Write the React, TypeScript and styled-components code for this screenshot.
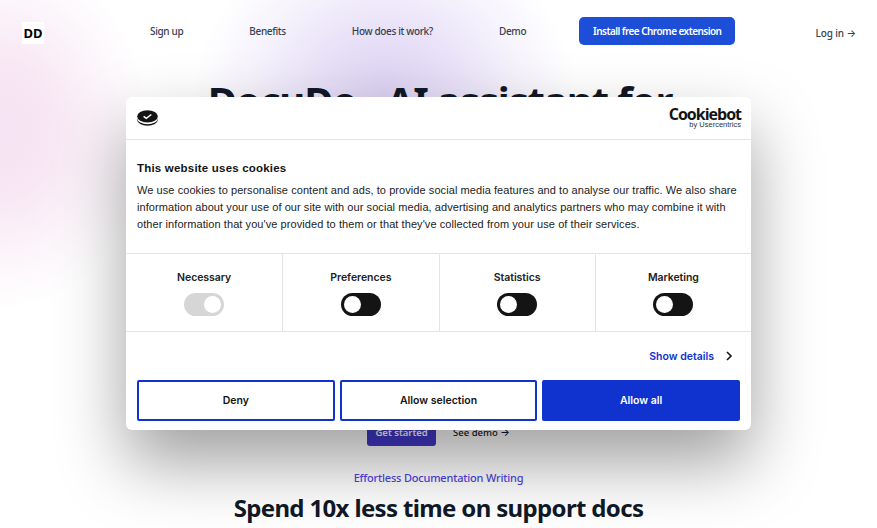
import React from 'react'
import styled, { createGlobalStyle } from 'styled-components'

const GlobalStyle = createGlobalStyle`
  html, body {
    margin: 0;
    padding: 0;
    height: 528px;
    overflow: hidden;
    background: #fff;
    font-family: 'Noto Sans', 'Liberation Sans', sans-serif;
  }
  * {
    box-sizing: border-box;
  }
`

const Page = styled.div`
  position: relative;
  width: 877px;
  height: 528px;
  overflow: hidden;
  background:
    radial-gradient(ellipse 150px 180px at 0px 130px, #f6e2f2 0%, rgba(246, 226, 242, 0.85) 35%, rgba(246, 226, 242, 0.35) 70%, rgba(246, 226, 242, 0) 100%),
    radial-gradient(ellipse 190px 160px at 385px 90px, #ddd3f3 0%, rgba(224, 214, 245, 0.75) 35%, rgba(224, 214, 245, 0.3) 70%, rgba(224, 214, 245, 0) 100%),
    #fff;
`

const Header = styled.header`
  display: flex;
  align-items: center;
  height: 66px;
  padding: 0 21px 0 22px;
`

const Logo = styled.div`
  display: flex;
  align-items: center;
  justify-content: center;
  width: 22px;
  height: 22px;
  background: #fff;
  color: #000;
  font-size: 13px;
  font-weight: 700;
`

const Nav = styled.nav`
  display: flex;
  align-items: center;
  gap: 66px;
  margin-left: 106px;
  margin-top: -5px;
`

const NavLink = styled.a`
  color: #374151;
  font-size: 10px;
  font-weight: 500;
  letter-spacing: -0.35px;
`

const InstallButton = styled.a`
  display: flex;
  align-items: center;
  justify-content: center;
  width: 156px;
  height: 28px;
  margin-left: -13px;
  border-radius: 5px;
  background: #1d4ed8;
  color: #fff;
  font-size: 10px;
  font-weight: 600;
  letter-spacing: -0.55px;
`

const LogIn = styled.a`
  margin-left: auto;
  color: #374151;
  font-size: 10px;
  font-weight: 500;
  letter-spacing: -0.1px;
`

const Arrow = styled.span`
  font-family: Inter, sans-serif;
  font-size: 10px;
`

const Hero = styled.section`
  display: flex;
  flex-direction: column;
  align-items: center;
`

const HeroTitle = styled.h1`
  margin: 11px 0 0 3px;
  color: #111827;
  font-size: 40px;
  line-height: 48px;
  font-weight: 700;
  letter-spacing: -1.1px;
  white-space: nowrap;
`

const Actions = styled.div`
  display: flex;
  align-items: center;
  gap: 17px;
  margin-top: 293px;
`

const StartButton = styled.a`
  display: flex;
  align-items: center;
  justify-content: center;
  width: 69px;
  height: 28px;
  border-radius: 3px;
  background: #4338ca;
  color: #fff;
  font-size: 9.5px;
  font-weight: 600;
`

const DemoLink = styled.a`
  color: #111827;
  font-size: 9.5px;
  font-weight: 500;
`

const Kicker = styled.p`
  margin: 23px 0 0;
  color: #4f46e5;
  font-size: 11px;
  line-height: 18px;
  font-weight: 500;
  letter-spacing: -0.2px;
`

const SectionTitle = styled.h2`
  margin: 5px 0 0;
  color: #111827;
  font-size: 24px;
  line-height: 32px;
  font-weight: 700;
  letter-spacing: -0.65px;
  white-space: nowrap;
`

const Dialog = styled.div`
  position: absolute;
  left: 126px;
  top: 97px;
  width: 625px;
  height: 333px;
  display: flex;
  flex-direction: column;
  background: #fff;
  border-radius: 6px;
  color: #141414;
  font-family: 'Liberation Sans', Arial, sans-serif;
  box-shadow: 0 32px 68px rgba(0, 0, 0, 0.38);
`

const DialogTop = styled.div`
  display: flex;
  align-items: center;
  justify-content: space-between;
  height: 42.5px;
  padding: 0 10px 0 11px;
  border-bottom: 1px solid #e4e4e4;
`

const Brand = styled.div`
  display: flex;
  flex-direction: column;
  align-items: flex-end;
`

const BrandName = styled.span`
  color: #141414;
  font-family: 'Open Sans', 'Liberation Sans', sans-serif;
  font-size: 16px;
  line-height: 14px;
  font-weight: 700;
  letter-spacing: -1px;
`

const BrandBy = styled.span`
  color: #333;
  font-size: 7.5px;
  line-height: 8px;
  font-weight: 400;
`

const Body = styled.div`
  height: 113px;
  padding: 21.5px 11px 0;
`

const BodyTitle = styled.h3`
  margin: 0 0 7px;
  font-size: 11.5px;
  line-height: 14px;
  font-weight: 700;
  letter-spacing: 0.2px;
`

const BodyText = styled.p`
  margin: 0;
  font-size: 11px;
  line-height: 17px;
  letter-spacing: 0.07px;
  color: #222;
`

const Consent = styled.div`
  display: grid;
  grid-template-columns: repeat(4, 1fr);
  height: 79.5px;
  border-top: 1px solid #e4e4e4;
  border-bottom: 1px solid #e4e4e4;
`

const ConsentItem = styled.div`
  display: flex;
  flex-direction: column;
  align-items: center;
  padding-top: 17.5px;
  gap: 8px;
  border-left: 1px solid #e4e4e4;
  &:first-child {
    border-left: 0;
  }
`

const ConsentLabel = styled.span`
  font-family: Inter, 'Liberation Sans', sans-serif;
  font-size: 10.5px;
  line-height: 14px;
  font-weight: 600;
  letter-spacing: -0.05px;
  color: #222;
`

const Toggle = styled.span<{ $locked?: boolean }>`
  display: flex;
  justify-content: ${(p) => (p.$locked ? 'flex-end' : 'flex-start')};
  align-items: center;
  width: 40px;
  height: 23px;
  padding: 0 3px;
  border-radius: 12px;
  background: ${(p) => (p.$locked ? '#d6d6d6' : '#141414')};
  &::after {
    content: '';
    width: 17px;
    height: 17px;
    border-radius: 50%;
    background: #fff;
  }
`

const DetailsRow = styled.div`
  display: flex;
  align-items: center;
  justify-content: flex-end;
  height: 48px;
  padding: 0 18px 0 0;
  gap: 11px;
`

const DetailsLink = styled.a`
  color: #1032cf;
  font-family: Inter, 'Liberation Sans', sans-serif;
  font-size: 10.5px;
  font-weight: 600;
`

const Buttons = styled.div`
  display: grid;
  grid-template-columns: repeat(3, 1fr);
  gap: 5px;
  padding: 0 11px;
`

const ActionButton = styled.button<{ $primary?: boolean }>`
  height: 41px;
  border: 2px solid #1032cf;
  border-radius: 2px;
  background: ${(p) => (p.$primary ? '#1032cf' : '#fff')};
  color: ${(p) => (p.$primary ? '#fff' : '#141414')};
  font-family: Inter, 'Liberation Sans', sans-serif;
  font-size: 10.5px;
  font-weight: 600;
`

const consentItems = ['Necessary', 'Preferences', 'Statistics', 'Marketing']

const CookieIcon = () => (
  <svg width="21" height="16" viewBox="0 0 21 16">
    <ellipse cx="10.5" cy="10" rx="10.3" ry="5.8" fill="#141414" />
    <ellipse cx="10.5" cy="8.6" rx="10.3" ry="5.6" fill="#fff" />
    <ellipse cx="10.5" cy="6.4" rx="10.3" ry="6.2" fill="#141414" />
    <path d="M6.6 6.3l2.7 2.1 5-3.9" fill="none" stroke="#fff" strokeWidth="1.5" />
  </svg>
)

const Chevron = () => (
  <svg width="8" height="10" viewBox="0 0 8 10">
    <path d="M2 1l4 4-4 4" fill="none" stroke="#141414" strokeWidth="1.6" />
  </svg>
)

const App = () => {
  return (
    <Page>
      <GlobalStyle />
      <Header>
        <Logo>DD</Logo>
        <Nav>
          <NavLink>Sign up</NavLink>
          <NavLink>Benefits</NavLink>
          <NavLink>How does it work?</NavLink>
          <NavLink>Demo</NavLink>
          <InstallButton>Install free Chrome extension</InstallButton>
        </Nav>
        <LogIn>Log in <Arrow>→</Arrow></LogIn>
      </Header>
      <Hero>
        <HeroTitle>DocuDo - AI assistant for</HeroTitle>
        <Actions>
          <StartButton>Get started</StartButton>
          <DemoLink>See demo <Arrow>→</Arrow></DemoLink>
        </Actions>
        <Kicker>Effortless Documentation Writing</Kicker>
        <SectionTitle>Spend 10x less time on support docs</SectionTitle>
      </Hero>
      <Dialog>
        <DialogTop>
          <CookieIcon />
          <Brand>
            <BrandName>Cookiebot</BrandName>
            <BrandBy>by Usercentrics</BrandBy>
          </Brand>
        </DialogTop>
        <Body>
          <BodyTitle>This website uses cookies</BodyTitle>
          <BodyText>
            We use cookies to personalise content and ads, to provide social media features and to analyse our traffic. We also share information about your use of our site with our social media, advertising and analytics partners who may combine it with other information that you've provided to them or that they've collected from your use of their services.
          </BodyText>
        </Body>
        <Consent>
          {consentItems.map((label, i) => (
            <ConsentItem key={label}>
              <ConsentLabel>{label}</ConsentLabel>
              <Toggle $locked={i === 0} />
            </ConsentItem>
          ))}
        </Consent>
        <DetailsRow>
          <DetailsLink>Show details</DetailsLink>
          <Chevron />
        </DetailsRow>
        <Buttons>
          <ActionButton>Deny</ActionButton>
          <ActionButton>Allow selection</ActionButton>
          <ActionButton $primary>Allow all</ActionButton>
        </Buttons>
      </Dialog>
    </Page>
  )
}

export default App
